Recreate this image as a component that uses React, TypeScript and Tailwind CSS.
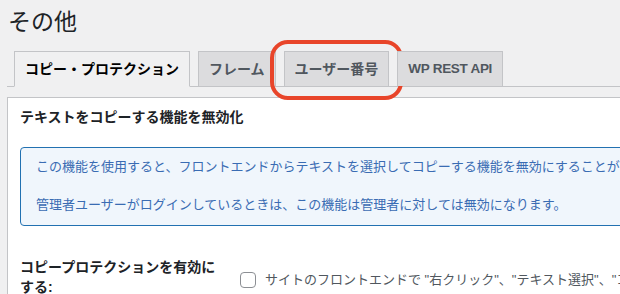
const tabs = [
  { label: "コピー・プロテクション", active: true },
  { label: "フレーム" },
  { label: "ユーザー番号", ring: true },
  { label: "WP REST API", latin: true },
];

export default function App() {
  return (
    <div className="w-[620px] h-[294px] overflow-hidden bg-[#f0f0f1] text-[#1d2327] font-['Liberation_Sans','Noto_Sans_CJK_JP',sans-serif]">
      <h1 className="pl-[8px] pt-[7px] text-[23px] leading-[30px] font-normal">その他</h1>

      <div className="mt-[14px] ml-[7px] flex border-b border-[#c3c4c7] pl-[7px]">
        {tabs.map((t, i) => (
          <div
            key={t.label}
            className={
              "relative border border-[#c3c4c7] px-[10px] py-[5px] font-semibold leading-6 whitespace-nowrap " +
              (t.latin ? "text-[13.5px] tracking-[-0.3px] " : "text-sm ") +
              (i > 0 ? "ml-[8px] " : "") +
              (t.active
                ? "-mb-px border-b-[#f0f0f1] bg-[#f0f0f1] text-black"
                : "border-b-0 bg-[#dcdcde] text-[#50575e]")
            }
          >
            {t.label}
            {t.ring && (
              <span className="pointer-events-none absolute left-[-15px] top-[-12px] h-[60px] w-[133px] rounded-[18px] border-4 border-[#e8452a]" />
            )}
          </div>
        ))}
      </div>

      <div className="mt-[10px] ml-[7px] w-[800px] border border-[#c3c4c7] bg-white px-[12px] pt-[9px] pb-8">
        <h2 className="text-sm font-semibold leading-5">テキストをコピーする機能を無効化</h2>

        <div className="mt-[20px] rounded-[4px] border border-[#2271b1] bg-[#f0f6fc] px-[15px] pt-[9px] pb-[10px] text-[13px] leading-5 text-[#3a6cb3] whitespace-nowrap">
          <p>この機能を使用すると、フロントエンドからテキストを選択してコピーする機能を無効にすることができます。</p>
          <p className="mt-[18px]">管理者ユーザーがログインしているときは、この機能は管理者に対しては無効になります。</p>
        </div>

        <div className="mt-[31px] flex">
          <div className="w-[200px] text-sm font-semibold leading-5">コピープロテクションを有効にする:</div>
          <div className="ml-[20px] mt-[13px] flex h-5 items-center whitespace-nowrap">
            <span className="h-4 w-4 rounded-[4px] border border-[#8c8f94] bg-white" />
            <span className="ml-[9px] text-[13px] text-[#50575e]">
              サイトのフロントエンドで "右クリック"、"テキスト選択"、"コピー" を無効にします。
            </span>
          </div>
        </div>
      </div>
    </div>
  );
}
